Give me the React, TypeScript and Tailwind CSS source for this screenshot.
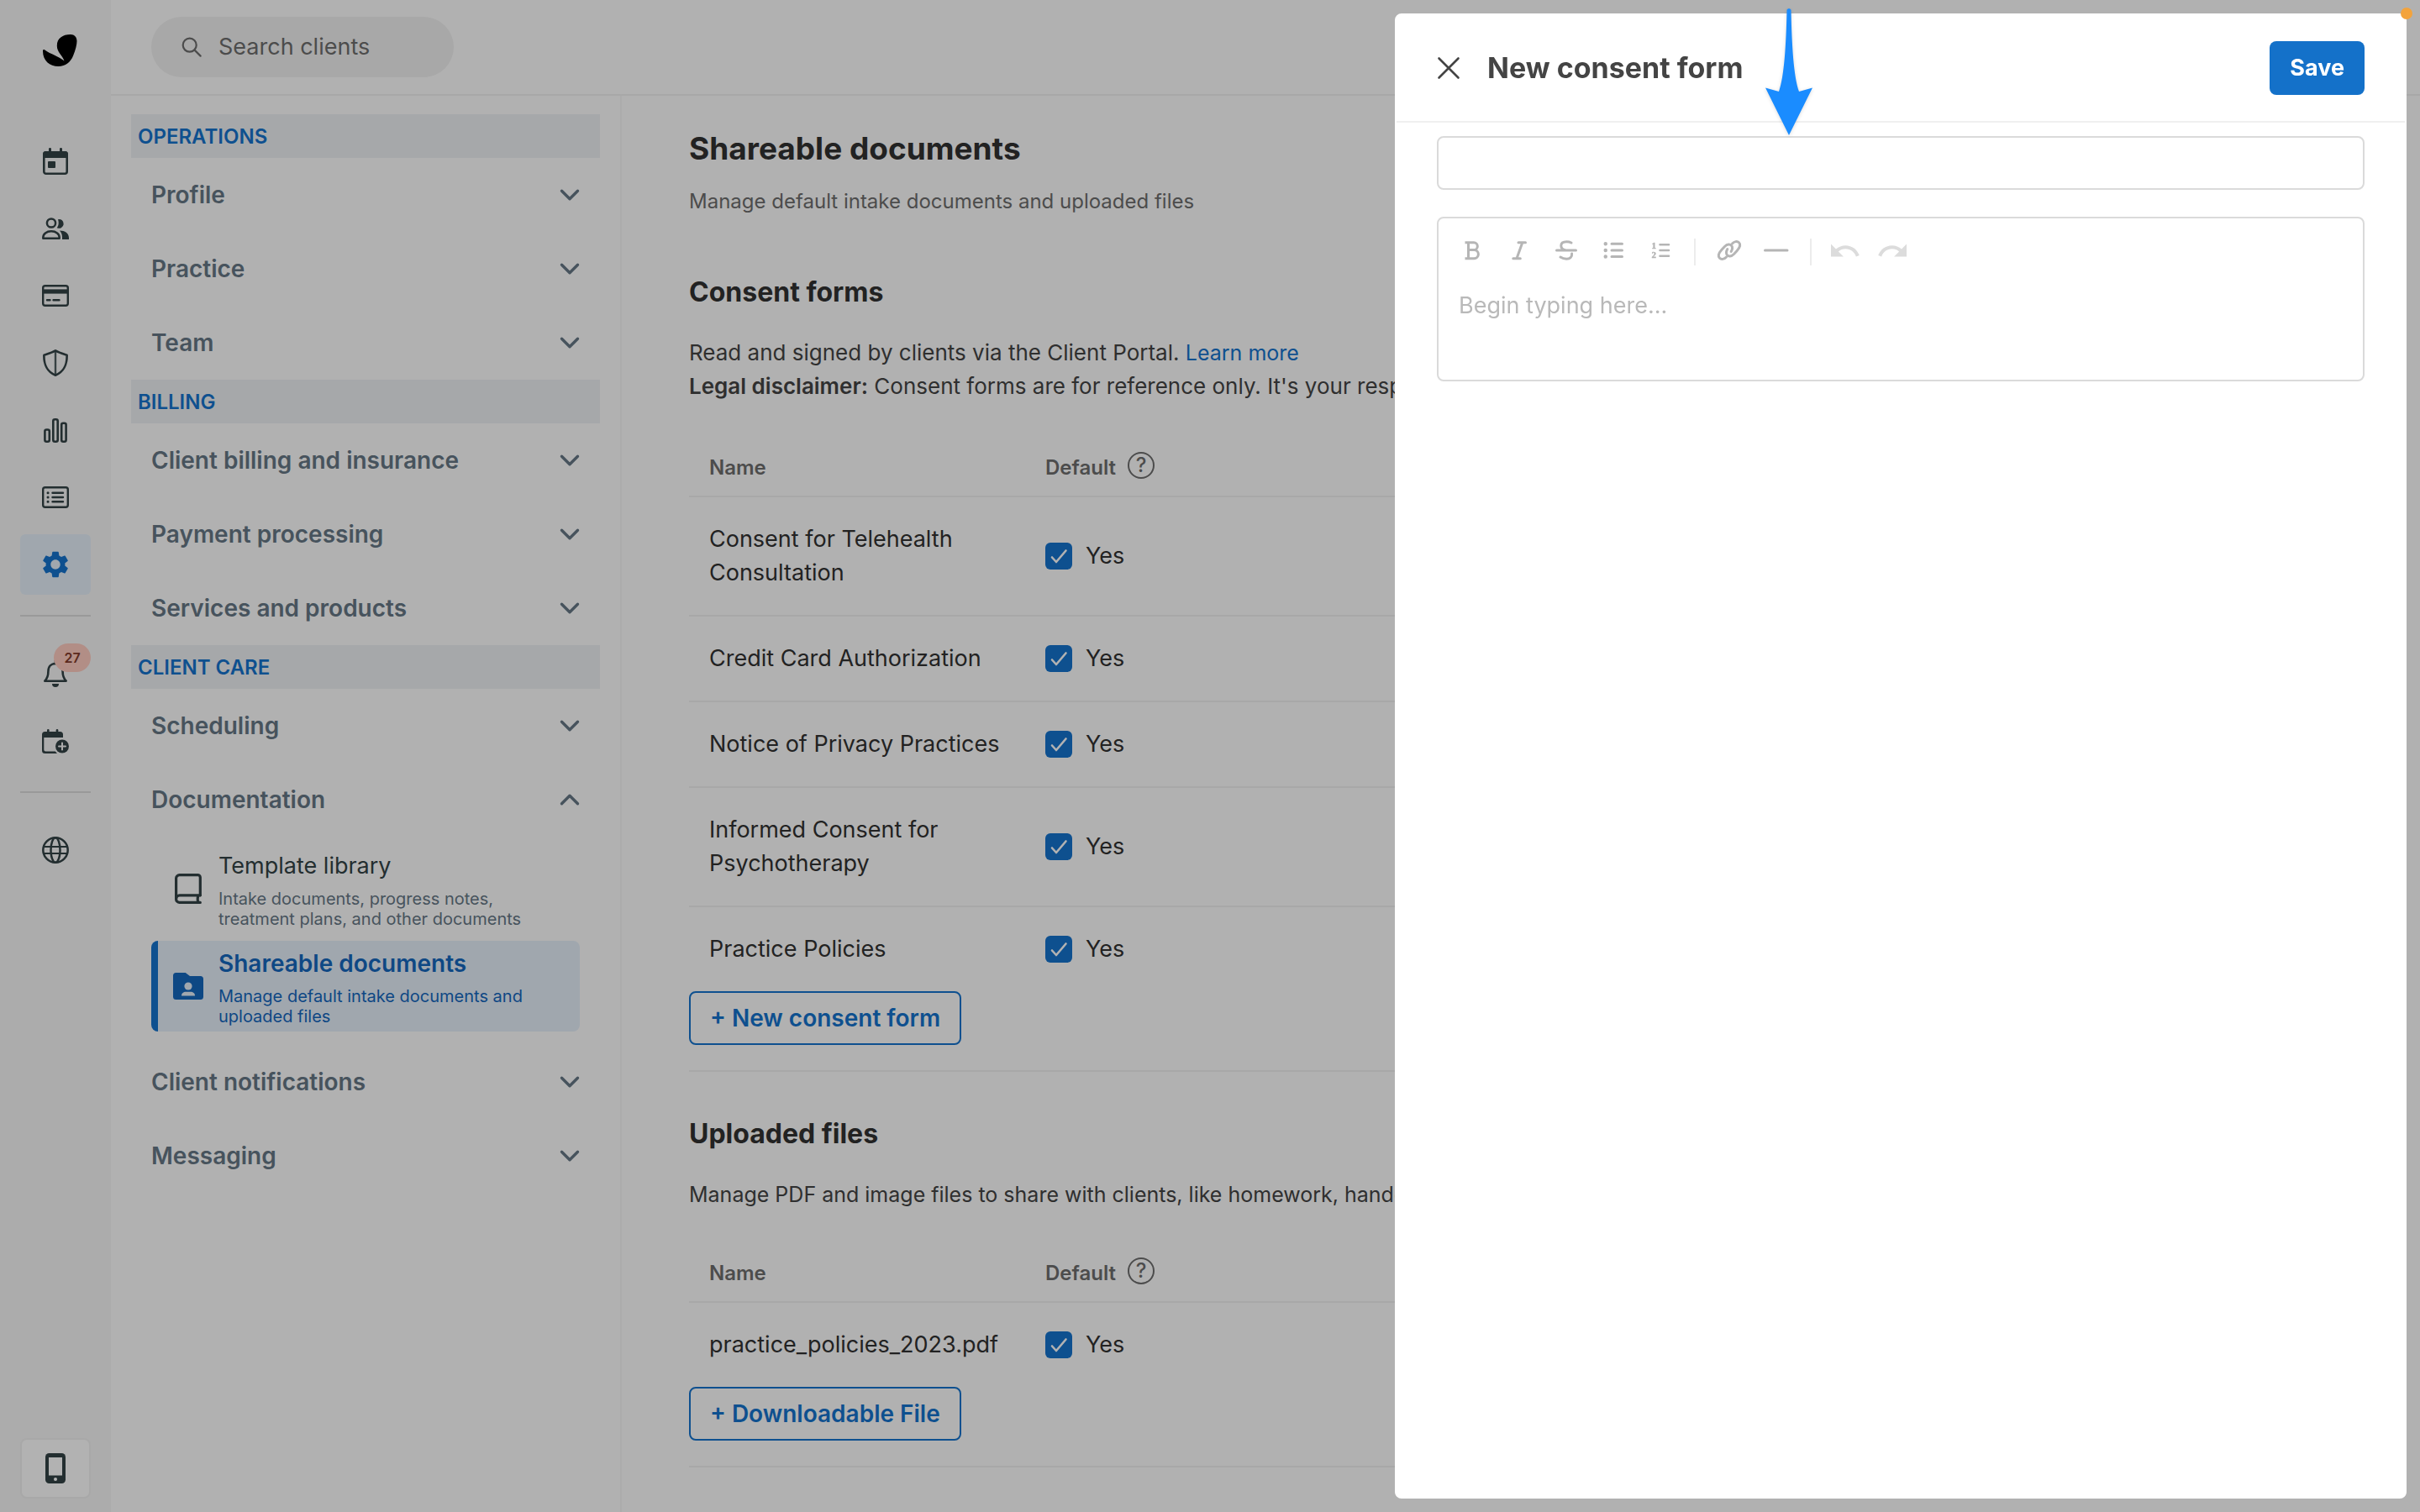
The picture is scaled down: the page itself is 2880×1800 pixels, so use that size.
import type { ReactNode } from "react";
import { MdSettings } from "react-icons/md";

function CalendarIcon() {
  return (
    <svg width="30" height="32" viewBox="0 0 30 32" fill="currentColor" aria-hidden="true">
      <rect x="1.3" y="5.3" width="27.4" height="25.4" rx="2.5" fill="none" stroke="currentColor" strokeWidth="2.6" />
      <path d="M3.5 4h23A3.5 3.5 0 0 1 30 7.5V12H0V7.500A3.500 3.500 0 0 1 3.500 4Z" />
      <rect x="7" y="0" width="3" height="6" rx="1.300" />
      <rect x="20" y="0" width="3" height="6" rx="1.300" />
      <rect x="6" y="16" width="9" height="8" rx="1" />
    </svg>
  );
}

function ClientsIcon() {
  return (
    <svg width="32" height="26" viewBox="0 0 32 26" fill="currentColor" aria-hidden="true">
      <circle cx="11" cy="6.500" r="5.100" fill="none" stroke="currentColor" strokeWidth="2.500" />
      <path d="M1.300 24.700v-1c0-4.200 4-7.400 9.700-7.400s9.700 3.200 9.700 7.400v1z" fill="none" stroke="currentColor" strokeWidth="2.500" strokeLinejoin="round" />
      <path d="M19 2.200a5.400 5.400 0 1 1-1.200 10c1.300-1.800 1.900-3.600 1.900-5.600 0-1.700-.2-3-.7-4.400z" />
      <path d="M21 15.600c6.300 0 11 3.500 11 8.400v2h-8v-2.500c0-3.200-1.100-5.800-3-7.900z" />
    </svg>
  );
}

function CardIcon() {
  return (
    <svg width="32" height="26" viewBox="0 0 32 26" fill="none" stroke="currentColor" strokeWidth="2.400" aria-hidden="true">
      <rect x="1.200" y="1.200" width="29.600" height="23.600" rx="2.500" />
      <path d="M1 8h30" strokeWidth="5.200" />
      <path d="M6 18.200h3.500M13.500 18.200h7" strokeLinecap="round" />
    </svg>
  );
}

function ShieldIcon() {
  return (
    <svg width="30" height="32" viewBox="0 0 30 32" fill="none" stroke="currentColor" strokeWidth="2.600" strokeLinejoin="round" aria-hidden="true">
      <path d="M15 1.400C19.500 4 24 5.200 28.600 6.700c.4 11-4 20.300-13.600 24C5.400 27 1 17.700 1.400 6.700 6 5.200 10.500 4 15 1.400Z" />
      <path d="M15 2v28" strokeWidth="2.400" opacity=".85" />
    </svg>
  );
}

function ChartIcon() {
  return (
    <svg width="28" height="29" viewBox="0 0 28 29" fill="none" stroke="currentColor" strokeWidth="2.600" aria-hidden="true">
      <rect x="1.400" y="13.500" width="5.400" height="14.200" rx="2" />
      <rect x="11.300" y="1.300" width="5.400" height="26.400" rx="2" />
      <rect x="21.200" y="5.800" width="5.400" height="21.900" rx="2" />
    </svg>
  );
}

function ListIcon() {
  return (
    <svg width="32" height="26" viewBox="0 0 32 26" fill="none" stroke="currentColor" strokeWidth="2.400" strokeLinecap="round" aria-hidden="true">
      <rect x="1.200" y="1.200" width="29.600" height="23.600" rx="2.500" />
      <path d="M12.500 7.700h12.500M12.500 13h12.500M12.500 18.300h12.500" />
      <path d="M7 7.700h.1M7 13h.1M7 18.300h.1" strokeWidth="3" />
    </svg>
  );
}

function BellIcon() {
  return (
    <svg width="32" height="36" viewBox="0 0 32 36" fill="none" stroke="currentColor" strokeWidth="2.600" strokeLinejoin="round" aria-hidden="true">
      <path d="M3.300 26.700C7 23 7.400 19.500 7.400 15.500 7.400 9.500 11 6 16 6s8.600 3.500 8.600 9.500c0 4 .4 7.500 4.100 11.200Z" />
      <path d="M16 2.500V6" strokeLinecap="round" />
      <path d="M12 30h8a4 4 0 0 1-8 0z" fill="currentColor" stroke="none" />
    </svg>
  );
}

function CalendarPlusIcon() {
  return (
    <svg width="32" height="29" viewBox="0 0 32 29" fill="currentColor" aria-hidden="true">
      <path d="M3.500 3h18A3.500 3.500 0 0 1 25 6.500V10H2.300v14.500a2 2 0 0 0 2 2h11.500L18 29H3.500A3.500 3.500 0 0 1 0 25.500v-19A3.500 3.500 0 0 1 3.500 3Z" />
      <rect x="6" y="0" width="2.600" height="5" rx="1.200" />
      <rect x="16.700" y="0" width="2.600" height="5" rx="1.200" />
      <circle cx="24" cy="20.500" r="8" />
      <path d="M24 16.500v8M20 20.500h8" stroke="#f7f7f7" strokeWidth="2" strokeLinecap="round" />
    </svg>
  );
}

function GlobeIcon() {
  return (
    <svg width="32" height="32" viewBox="0 0 32 32" fill="none" stroke="currentColor" strokeWidth="2.500" aria-hidden="true">
      <circle cx="16" cy="16" r="14.700" />
      <ellipse cx="16" cy="16" rx="5.500" ry="14.700" />
      <path d="M2 12h28M2 20h28" strokeWidth="2.200" />
    </svg>
  );
}

function BookIcon() {
  return (
    <svg width="32" height="36" viewBox="0 0 32 36" fill="none" stroke="currentColor" strokeWidth="3.200" strokeLinecap="round" strokeLinejoin="round" aria-hidden="true">
      <path d="M30.300 25.800V4.600a3 3 0 0 0-3-3H5.600a4 4 0 0 0-4 4v24.800a4 4 0 0 0 4 4h24.700" />
      <path d="M30.300 25.800H5.800a4.300 4.300 0 0 0-4.200 4.200M27.800 26.500c-.8 2.500-.8 5 0 7.500" />
    </svg>
  );
}

function FolderPersonIcon() {
  return (
    <svg width="36" height="32" viewBox="0 0 36 32" fill="currentColor" aria-hidden="true">
      <path d="M3.500 0h11.200L20 4h12.500A3.500 3.500 0 0 1 36 7.500v21a3.500 3.500 0 0 1-3.500 3.500h-29A3.500 3.500 0 0 1 0 28.500v-25A3.500 3.500 0 0 1 3.500 0Z" />
      <circle cx="18" cy="16" r="4.600" fill="#e5f0fa" />
      <path d="M10 27.500c0-3.200 2.500-4.700 5-4.700h6c2.500 0 5 1.500 5 4.700z" fill="#e5f0fa" />
    </svg>
  );
}

function PhoneIcon() {
  return (
    <svg width="24" height="36" viewBox="0 0 24 36" fill="currentColor" aria-hidden="true">
      <rect width="24" height="36" rx="4.500" />
      <rect x="4" y="5" width="16" height="21.500" fill="#fff" />
      <circle cx="12" cy="31" r="2" fill="#fff" />
    </svg>
  );
}

function Chevron({ up = false }: { up?: boolean }) {
  return (
    <svg width="24" height="16" viewBox="0 0 24 16" fill="none" stroke="currentColor" strokeWidth="3.400" strokeLinecap="round" strokeLinejoin="round" aria-hidden="true">
      <path d={up ? "M2.500 12.800 12 3.300l9.500 9.500" : "M2.500 3.300 12 12.800l9.500-9.500"} />
    </svg>
  );
}

const mainNav: { label: string; icon: ReactNode; active?: boolean }[] = [
  { label: "Calendar", icon: <CalendarIcon /> },
  { label: "Clients", icon: <ClientsIcon /> },
  { label: "Billing", icon: <CardIcon /> },
  { label: "Insurance", icon: <ShieldIcon /> },
  { label: "Analytics", icon: <ChartIcon /> },
  { label: "Activity", icon: <ListIcon /> },
  { label: "Settings", icon: <MdSettings size={38} aria-hidden="true" />, active: true },
];

function RailLink({ label, active = false, children }: { label: string; active?: boolean; children: ReactNode }) {
  return (
    <a
      href="#"
      aria-label={label}
      className={
        active
          ? "relative flex h-18 w-full items-center justify-center rounded-md bg-[#e5f0fa] text-[#1573cd]"
          : "relative flex h-18 w-full items-center justify-center rounded-md text-[#334346]"
      }
    >
      {children}
    </a>
  );
}

function Rail() {
  return (
    <nav aria-label="Main" className="flex w-[132px] shrink-0 flex-col items-center bg-[#f7f7f7] px-6 pt-10 pb-4">
      <a href="#" aria-label="Home" className="mb-[76px] self-end pr-4">
        <svg width="42" height="40" viewBox="-1 -1 42 40" fill="#000" aria-hidden="true">
          <path d="M33 0C23.500 0 16.800 4.500 16.800 13.500c0 7.500 6.200 11 8.700 18C18 25.500 10 24 2 18.300.6 17.400 0 18 0 20c0 11 8 18 18.500 18 8.500 0 14.500-5 17.500-12.500 3-7.500 4.500-13.500 4.500-17.500 0-5-3-8-7.500-8Z" />
        </svg>
      </a>
      <div className="flex w-full flex-col gap-2">
        {mainNav.map((n) => (
          <RailLink key={n.label} label={n.label} active={n.active}>
            {n.icon}
          </RailLink>
        ))}
      </div>
      <hr className="mt-6 mb-8 w-full border-t-2 border-[#dcdcdc]" />
      <div className="flex w-full flex-col gap-2">
        <RailLink label="Notifications">
          <BellIcon />
          <span className="absolute top-0 right-0 flex h-[34px] w-11 items-center justify-center rounded-full bg-[#ffccc1] text-base font-semibold text-[#843c2c]">
            27
          </span>
        </RailLink>
        <RailLink label="Appointment requests">
          <CalendarPlusIcon />
        </RailLink>
      </div>
      <hr className="mt-6 mb-8 w-full border-t-2 border-[#dcdcdc]" />
      <RailLink label="Website">
        <GlobeIcon />
      </RailLink>
      <button type="button" aria-label="Get the mobile app" className="mt-auto flex h-18 w-full items-center justify-center rounded-lg border-2 border-[#f1f1f1] bg-white text-[#334346]">
        <PhoneIcon />
      </button>
    </nav>
  );
}

function SectionTitle({ children }: { children: ReactNode }) {
  return <h2 className="bg-[#eef1f4] px-2 pt-0.5 text-2xl leading-[50px] font-semibold text-[#1573cd]">{children}</h2>;
}

function Group({ label, open = false }: { label: string; open?: boolean }) {
  return (
    <button type="button" aria-expanded={open} className="flex h-[88px] w-full items-center justify-between px-6 text-left text-[28px] leading-10 font-semibold text-[#667886]">
      {label}
      <Chevron up={open} />
    </button>
  );
}

function SubLink({ title, text, icon, active = false }: { title: string; text: string; icon: ReactNode; active?: boolean }) {
  return (
    <a
      href="#"
      aria-current={active ? "page" : undefined}
      className={
        active
          ? "flex items-center rounded-lg border-l-8 border-[#1573cd] bg-[#e5f0fa] py-1.5 pr-10 text-[#1567be]"
          : "flex items-center rounded-lg border-l-8 border-transparent py-1.5 pr-10 text-[#334346]"
      }
    >
      <span className="flex w-[72px] shrink-0 justify-center">{icon}</span>
      <span className="flex flex-col gap-1.5">
        <span className={active ? "text-[28px] leading-[42px] font-semibold" : "text-[27px] leading-[42px]"}>{title}</span>
        <span className={active ? "text-xl leading-6" : "text-xl leading-6 text-[#667886]"}>{text}</span>
      </span>
    </a>
  );
}

function SettingsNav() {
  return (
    <aside className="w-[608px] shrink-0 border-r-2 border-[#f7f7f7] py-[22px] pr-6 pl-6">
      <nav aria-label="Settings">
        <SectionTitle>OPERATIONS</SectionTitle>
        <Group label="Profile" />
        <Group label="Practice" />
        <Group label="Team" />
        <SectionTitle>BILLING</SectionTitle>
        <Group label="Client billing and insurance" />
        <Group label="Payment processing" />
        <Group label="Services and products" />
        <SectionTitle>CLIENT CARE</SectionTitle>
        <Group label="Scheduling" />
        <Group label="Documentation" open />
        <div className="flex flex-col gap-2 px-6 pt-2 pb-4">
          <SubLink title="Template library" text="Intake documents, progress notes, treatment plans, and other documents" icon={<BookIcon />} />
          <SubLink active title="Shareable documents" text="Manage default intake documents and uploaded files" icon={<FolderPersonIcon />} />
        </div>
        <Group label="Client notifications" />
        <Group label="Messaging" />
      </nav>
    </aside>
  );
}

function DocTable({ rows }: { rows: string[] }) {
  return (
    <table className="w-full table-fixed border-collapse text-left text-[#313131]">
      <thead>
        <tr className="h-18 border-b-2 border-[#f1f1f1] text-2xl text-[#6e6e6e]">
          <th scope="col" className="w-[400px] pt-1 pl-6 font-semibold">
            Name
          </th>
          <th scope="col" className="pt-1 pl-6 font-semibold">
            <span className="flex items-center gap-3.5">
              Default
              <button type="button" aria-label="About defaults" className="mb-1.5 flex size-8 items-center justify-center rounded-full border-2 border-[#6e6e6e] text-2xl leading-none font-medium">
                ?
              </button>
            </span>
          </th>
        </tr>
      </thead>
      <tbody>
        {rows.map((name) => (
          <tr key={name} className="border-b-2 border-[#f1f1f1] text-[27px] leading-10 last:border-b-0">
            <td className="py-[30px] pr-4 pl-6">{name}</td>
            <td className="pl-6">
              <label className="flex items-center gap-4">
                <span className="relative size-8">
                  <input type="checkbox" defaultChecked aria-label={`${name}: default`} className="block size-8 appearance-none rounded-md bg-[#1573cd]" />
                  <svg className="pointer-events-none absolute inset-0" width="32" height="32" viewBox="0 0 32 32" fill="none" stroke="#fff" strokeWidth="2.600" strokeLinecap="round" strokeLinejoin="round" aria-hidden="true">
                    <path d="m8 17.500 5 5.500L24.500 9.500" />
                  </svg>
                </span>
                Yes
              </label>
            </td>
          </tr>
        ))}
      </tbody>
    </table>
  );
}

function AddButton({ children }: { children: ReactNode }) {
  return (
    <button type="button" className="h-16 rounded-lg border-2 border-[#1573cd] px-[23px] text-[28px] font-semibold text-[#1573cd]">
      {children}
    </button>
  );
}

function Content() {
  return (
    <main className="min-w-0 flex-1 px-20 pt-10">
      <h1 className="text-[37px] leading-[46px] font-bold text-[#313131]">Shareable documents</h1>
      <p className="mt-6 text-2xl leading-8 text-[#6e6e6e]">Manage default intake documents and uploaded files</p>

      <section className="border-b-2 border-[#f1f1f1] pb-[30px]">
        <h2 className="mt-18 text-[32px] leading-10 font-bold text-[#313131]">Consent forms</h2>
        <p className="mt-8 mb-[39px] text-[26px] leading-10 whitespace-nowrap text-[#444]">
          Read and signed by clients via the Client Portal.{" "}
          <a href="#" className="text-[25px] text-[#1573cd]">
            Learn more
          </a>
          <br />
          <strong className="font-semibold">Legal disclaimer:</strong> Consent forms are for reference only. It's your responsibility
        </p>
        <DocTable rows={["Consent for Telehealth Consultation", "Credit Card Authorization", "Notice of Privacy Practices", "Informed Consent for Psychotherapy", "Practice Policies"]} />
        <AddButton>+ New consent form</AddButton>
      </section>

      <section className="border-b-2 border-[#f1f1f1] pt-[54px] pb-[30px]">
        <h2 className="text-[32px] leading-10 font-bold text-[#313131]">Uploaded files</h2>
        <p className="mt-8 mb-9 text-[25px] leading-10 whitespace-nowrap text-[#444]">Manage PDF and image files to share with clients, like homework, handouts</p>
        <DocTable rows={["practice_policies_2023.pdf"]} />
        <AddButton>+ Downloadable File</AddButton>
      </section>
    </main>
  );
}

const link = "M-3.500 8C-6 10.700-9.500 11.200-11.500 9.200-14 6.700-12.500 3.200-9-.7L-5.500-4.500C-2.500-7.500 1-7.800 2.800-5.400 4-3.500 3.600-1 2.200 1.400";

const undo = "M12.5 8c-2.65 0-5.05.99-6.9 2.600L2 7v9h9l-3.620-3.620c1.390-1.160 3.160-1.880 5.120-1.880 3.540 0 6.550 2.310 7.600 5.500l2.370-.780C21.080 11.030 17.150 8 12.500 8z";

function ToolButton({ label, children }: { label: string; children: ReactNode }) {
  return (
    <button type="button" aria-label={label} className="text-[#b5b5b5]">
      <svg width="56" height="28" viewBox="0 0 56 28" fill="none" stroke="currentColor" strokeWidth="3" strokeLinecap="round" strokeLinejoin="round" aria-hidden="true">
        {children}
      </svg>
    </button>
  );
}

function Separator() {
  return <span className="mx-3 h-8 w-0.5 bg-[#ececec]" />;
}

function Toolbar() {
  return (
    <div role="toolbar" aria-label="Formatting" className="flex items-start px-3 pt-6">
      <ToolButton label="Bold">
        <path strokeLinecap="butt" d="M19.500 4.800H30a4.300 4.300 0 0 1 0 8.700M23.500 13.500h6.800a5 5 0 0 1 0 10.200H19.500M23.500 4.800v18.900" />
      </ToolButton>
      <ToolButton label="Italic">
        <path d="M27 4.800h8.500M20.800 23.700h8.500M31.800 4.800l-6.800 18.900" />
      </ToolButton>
      <ToolButton label="Strikethrough">
        <path d="M16.500 14h23M34 5C32 4 30 3.800 28.500 3.800c-4 0-6.700 1.600-6.700 4.600 0 2.400 1.500 4.400 5 5.400M34.600 18c.5 4-2.400 6.200-6.200 6.200-3 0-5.300-.8-7.400-2.200" />
      </ToolButton>
      <ToolButton label="Bulleted list">
        <path d="M26 6.300h12.500M26 14h12.500M26 21.500h12.500" />
        <path d="M18.700 6.300h.1M18.700 14h.1M18.700 21.500h.1" strokeWidth="4.400" />
      </ToolButton>
      <ToolButton label="Numbered list">
        <path d="M27.500 7.300h10.500M27.500 14h10.500M27.500 20.800h10.500" strokeWidth="2.600" />
        <g fill="currentColor" strokeWidth=".4" className="font-['Liberation_Serif',serif] text-[11px] font-bold">
          <text x="17.500" y="12">1</text>
          <text x="17.500" y="23">2</text>
        </g>
      </ToolButton>
      <Separator />
      <ToolButton label="Link">
        <g transform="translate(28 14)">
          <path d={link} />
          <path d={link} transform="rotate(180)" />
        </g>
      </ToolButton>
      <ToolButton label="Divider">
        <path d="M14.500 14h26.500" />
      </ToolButton>
      <Separator />
      <ToolButton label="Undo">
        <path d={undo} transform="translate(7.700 -5) scale(1.650)" fill="#dcdcdc" stroke="none" />
      </ToolButton>
      <ToolButton label="Redo">
        <path d={undo} transform="translate(48.300 -5) scale(-1.650 1.650)" fill="#dcdcdc" stroke="none" />
      </ToolButton>
    </div>
  );
}

function ConsentFormPanel() {
  return (
    <section role="dialog" aria-label="New consent form" className="fixed inset-y-4 right-4 flex w-[1204px] flex-col rounded-lg border-2 border-white bg-white">
      <header className="flex h-32 items-center border-b-2 border-[#f0f0f0] px-12">
        <button type="button" aria-label="Close" className="mr-8">
          <svg width="28" height="28" viewBox="0 0 28 28" fill="none" stroke="#444" strokeWidth="2.600" strokeLinecap="round" aria-hidden="true">
            <path d="M2.500 2.500l23 23M25.500 2.500l-23 23" />
          </svg>
        </button>
        <h2 className="text-[34px] leading-10 font-bold text-[#444]">New consent form</h2>
        <button type="button" className="ml-auto h-16 rounded-lg bg-[#1471c9] px-6 text-[27px] font-bold text-white">
          Save
        </button>
      </header>
      <form className="flex flex-col gap-8 px-12 pt-4">
        <input type="text" aria-label="Form title" className="h-16 rounded-lg border-2 border-[#dadada] px-6 text-[27px] outline-none" />
        <div className="flex flex-col rounded-lg border-2 border-[#dadada]">
          <Toolbar />
          <textarea aria-label="Form body" placeholder="Begin typing here..." className="mt-7 block h-27 resize-none px-6 text-[27px] leading-10 outline-none placeholder:text-[#b9b9b9]" />
        </div>
      </form>
      <svg className="pointer-events-none absolute -top-2 left-[436px] drop-shadow-sm" width="62" height="154" viewBox="2098 10 62 154" fill="#1a8cff" aria-hidden="true">
        <path d="M2126.500 12c.5-2.500 4.500-2.500 5 0C2132.500 55 2134.500 90 2141 109l16-4.500L2129 161l-28-56.500 16 4.500C2123.500 90 2125.500 55 2126.500 12Z" />
      </svg>
      <span className="absolute -top-[9px] -right-[9px] size-3.5 rounded-full bg-[#f3a33c]" />
    </section>
  );
}

export default function App() {
  return (
    <div className="flex min-h-screen overflow-hidden bg-[#fefefe] font-['Inter',sans-serif]">
      <Rail />
      <div className="flex min-w-0 flex-1 flex-col">
        <header className="flex h-[114px] items-center border-b-2 border-[#f1f1f1] px-12">
          <label className="flex h-18 w-[360px] items-center rounded-full bg-[#f1f1f1] pl-9">
            <svg width="24" height="24" viewBox="0 0 24 24" fill="none" stroke="#6e6e6e" strokeWidth="2.200" strokeLinecap="round" aria-hidden="true">
              <circle cx="9.700" cy="9.700" r="8" />
              <path d="m15.600 15.600 7 7" />
            </svg>
            <input type="search" aria-label="Search clients" placeholder="Search clients" className="ml-5 min-w-0 flex-1 bg-transparent text-[27px] leading-10 outline-none placeholder:text-[#6e6e6e]" />
          </label>
        </header>
        <div className="flex flex-1">
          <SettingsNav />
          <Content />
        </div>
      </div>
      <div className="fixed inset-0 bg-black/30" />
      <ConsentFormPanel />
    </div>
  );
}
